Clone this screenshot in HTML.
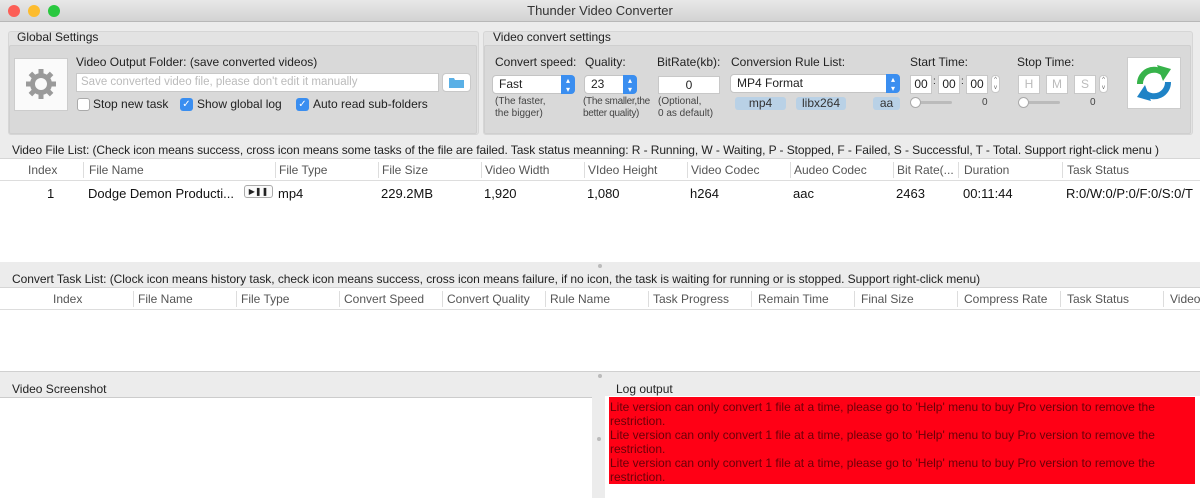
<!DOCTYPE html>
<html><head><meta charset="utf-8"><style>
*{box-sizing:border-box;margin:0;padding:0}
body{width:1200px;height:498px;overflow:hidden;background:#ececec;font-family:"Liberation Sans",sans-serif;font-size:12px;color:#222;position:relative}
.a{position:absolute;white-space:nowrap}
.title{left:0;top:0;width:1200px;height:22px;background:linear-gradient(#e8e8e8,#d3d3d3);border-bottom:1px solid #b8b8b8;text-align:center;line-height:22px;font-size:13px;color:#333}
.dot{width:12px;height:12px;border-radius:50%;top:5px}
.grp{border:1px solid #d6d6d6;background:#e3e3e3;border-radius:3px}
.inner{background:#d9d9d9;border:1px solid #cfcfcf;border-radius:2px}
.in{background:#fff;border:1px solid #c8c8c8}
.sel{background:#fff;border:1px solid #c4c4c4;border-radius:4px;padding-left:6px;line-height:17px}
.sel i{position:absolute;right:-1px;top:-1px;width:14px;height:19px;background:#3a8ef0;border-radius:0 4px 4px 0;color:#fff;font-style:normal;font-size:8px;text-align:center;line-height:9px;padding-top:1px}
.small{font-size:10px;color:#444;line-height:12px}
.tag{background:#b9d1e6;border-radius:3px;text-align:center;font-size:12px;color:#333;height:13px;line-height:13px}
.cb{width:13px;height:13px;border-radius:3px}
.cb.on{background:#3a8ef0;color:#fff;font-size:10px;line-height:13px;text-align:center}
.cb.off{background:#fff;border:1px solid #aaa}
.white{background:#fff}
.hdr{height:22px;border-bottom:1px solid #ddd;background:#fff;color:#555}
.hdr span,.row span{position:absolute;top:4px}
.sep{position:absolute;top:3px;width:1px;height:16px;background:#ddd}
.red{background:#ff0015;color:#6a0008;font-size:12px;line-height:14px;padding:3px 1px;letter-spacing:0;white-space:nowrap}
</style></head><body>
<div class="a title">Thunder Video Converter</div>
<div class="a dot" style="left:8px;background:#fc5f57"></div>
<div class="a dot" style="left:28px;background:#fdbc2e"></div>
<div class="a dot" style="left:48px;background:#29c83f"></div>

<div class="a grp" style="left:8px;top:31px;width:471px;height:104px"></div>
<div class="a" style="left:17px;top:30px;font-size:12px">Global Settings</div>
<div class="a inner" style="left:9px;top:45px;width:468px;height:89px"></div>
<div class="a" style="left:14px;top:58px;width:54px;height:53px;background:#fafafa;border:1px solid #ccc"></div>
<svg class="a" style="left:24px;top:67px" width="34" height="34" viewBox="0 0 34 34"><g fill="#9a9a9a"><circle cx="17" cy="17" r="11"/><g id="t"><rect x="14.5" y="2" width="5" height="7"/><rect x="14.5" y="25" width="5" height="7"/></g><use href="#t" transform="rotate(45 17 17)"/><use href="#t" transform="rotate(90 17 17)"/><use href="#t" transform="rotate(135 17 17)"/></g><circle cx="17" cy="17" r="6" fill="#fafafa"/></svg>
<div class="a" style="left:76px;top:55px">Video Output Folder: (save converted videos)</div>
<div class="a in" style="left:76px;top:73px;width:363px;height:19px;color:#bbb;padding-left:4px;line-height:17px;font-size:11.5px">Save converted video file, please don't edit it manually</div>
<div class="a" style="left:442px;top:73px;width:29px;height:19px;background:#fff;border:1px solid #c8c8c8;border-radius:4px"></div>
<svg class="a" style="left:449px;top:77px" width="15" height="11"><path d="M0 1h5l1 2h9v8H0z" fill="#5ab0e6"/></svg>
<div class="a cb off" style="left:77px;top:98px"></div><div class="a" style="left:93px;top:97px">Stop new task</div>
<div class="a cb on" style="left:180px;top:98px">✓</div><div class="a" style="left:197px;top:97px">Show global log</div>
<div class="a cb on" style="left:296px;top:98px">✓</div><div class="a" style="left:313px;top:97px">Auto read sub-folders</div>

<div class="a grp" style="left:483px;top:31px;width:710px;height:104px"></div>
<div class="a" style="left:493px;top:30px">Video convert settings</div>
<div class="a inner" style="left:484px;top:45px;width:707px;height:89px"></div>
<div class="a" style="left:495px;top:55px">Convert speed:</div>
<div class="a sel" style="left:492px;top:75px;width:83px;height:19px">Fast<i>▴<br>▾</i></div>
<div class="a small" style="left:495px;top:96px">(The faster,<br>the bigger)</div>
<div class="a" style="left:585px;top:55px">Quality:</div>
<div class="a sel" style="left:584px;top:75px;width:53px;height:19px">23<i>▴<br>▾</i></div>
<div class="a small" style="left:583px;top:96px;letter-spacing:-0.3px">(The smaller,the<br>better quality)</div>
<div class="a" style="left:657px;top:55px">BitRate(kb):</div>
<div class="a in" style="left:658px;top:76px;width:62px;height:18px;text-align:center;line-height:16px">0</div>
<div class="a small" style="left:658px;top:96px">(Optional,<br>0 as default)</div>
<div class="a" style="left:731px;top:55px">Conversion Rule List:</div>
<div class="a sel" style="left:730px;top:74px;width:170px;height:19px">MP4 Format<i>▴<br>▾</i></div>
<div class="a tag" style="left:735px;top:97px;width:51px">mp4</div>
<div class="a tag" style="left:796px;top:97px;width:50px">libx264</div>
<div class="a tag" style="left:873px;top:97px;width:27px;overflow:hidden">aa</div>
<div class="a" style="left:910px;top:55px">Start Time:</div>
<div class="a in" style="left:910px;top:75px;width:22px;height:19px;text-align:center;line-height:17px">00</div>
<div class="a in" style="left:938px;top:75px;width:22px;height:19px;text-align:center;line-height:17px">00</div>
<div class="a in" style="left:966px;top:75px;width:22px;height:19px;text-align:center;line-height:17px">00</div>
<div class="a" style="left:933px;top:76px;font-size:10px">:</div><div class="a" style="left:961px;top:76px;font-size:10px">:</div>
<div class="a in" style="left:991px;top:75px;width:9px;height:18px;border-radius:4px;font-size:6px;line-height:8px;text-align:center;color:#666">^<br>v</div>
<div class="a" style="left:912px;top:101px;width:40px;height:3px;background:#bbb;border-radius:2px"></div>
<div class="a" style="left:910px;top:97px;width:11px;height:11px;border-radius:50%;background:#fff;border:1px solid #aaa"></div>
<div class="a small" style="left:982px;top:97px">0</div>
<div class="a" style="left:1017px;top:55px">Stop Time:</div>
<div class="a in" style="left:1018px;top:75px;width:22px;height:19px;text-align:center;line-height:17px;color:#bbb">H</div>
<div class="a in" style="left:1046px;top:75px;width:22px;height:19px;text-align:center;line-height:17px;color:#bbb">M</div>
<div class="a in" style="left:1074px;top:75px;width:22px;height:19px;text-align:center;line-height:17px;color:#bbb">S</div>
<div class="a in" style="left:1099px;top:75px;width:9px;height:18px;border-radius:4px;font-size:6px;line-height:8px;text-align:center;color:#666">^<br>v</div>
<div class="a" style="left:1020px;top:101px;width:40px;height:3px;background:#bbb;border-radius:2px"></div>
<div class="a" style="left:1018px;top:97px;width:11px;height:11px;border-radius:50%;background:#fff;border:1px solid #aaa"></div>
<div class="a small" style="left:1090px;top:97px">0</div>
<div class="a" style="left:1127px;top:57px;width:54px;height:52px;background:#fff;border:1px solid #ccc"></div>
<svg class="a" style="left:1131px;top:62px" width="46" height="42" viewBox="0 0 46 42"><path d="M9 22A14 14 0 0 1 32 11" stroke="#37b34a" stroke-width="6" fill="none"/><path d="M26 3l14 4-8 12z" fill="#37b34a"/><path d="M37 20A14 14 0 0 1 14 31" stroke="#1f83c6" stroke-width="6" fill="none"/><path d="M20 39L6 35l8-12z" fill="#1f83c6"/></svg>

<div class="a" style="left:12px;top:143px;letter-spacing:-0.08px">Video File List: (Check icon means success, cross icon means some tasks of the file are failed. Task status meanning: R - Running, W - Waiting, P - Stopped, F - Failed, S - Successful, T - Total. Support right-click menu )</div>
<div class="a white" style="left:0;top:158px;width:1200px;height:104px;border-top:1px solid #d6d6d6"></div>
<div class="a hdr" style="left:0;top:159px;width:1200px">
<span style="left:28px">Index</span><span style="left:89px">File Name</span><span style="left:279px">File Type</span><span style="left:382px">File Size</span><span style="left:485px">Video Width</span><span style="left:588px">VIdeo Height</span><span style="left:691px">Video Codec</span><span style="left:794px">Audeo Codec</span><span style="left:897px">Bit Rate(...</span><span style="left:964px">Duration</span><span style="left:1067px">Task Status</span>
<i class="sep" style="left:83px"></i><i class="sep" style="left:275px"></i><i class="sep" style="left:378px"></i><i class="sep" style="left:481px"></i><i class="sep" style="left:584px"></i><i class="sep" style="left:687px"></i><i class="sep" style="left:790px"></i><i class="sep" style="left:893px"></i><i class="sep" style="left:958px"></i><i class="sep" style="left:1062px"></i></div>
<div class="a row" style="left:0;top:182px;width:1200px;height:22px;font-size:13px;color:#111">
<span style="left:47px">1</span><span style="left:88px">Dodge Demon Producti...</span><span style="left:278px">mp4</span><span style="left:381px">229.2MB</span><span style="left:484px">1,920</span><span style="left:587px">1,080</span><span style="left:690px">h264</span><span style="left:793px">aac</span><span style="left:896px">2463</span><span style="left:963px">00:11:44</span><span style="left:1066px">R:0/W:0/P:0/F:0/S:0/T</span></div>
<div class="a" style="left:244px;top:185px;width:29px;height:13px;border:1px solid #aaa;border-radius:3px;font-size:8px;text-align:center;line-height:11px;background:#fafafa">▶❚❚</div>
<div class="a" style="left:598px;top:264px;width:4px;height:4px;border-radius:50%;background:#bbb"></div>

<div class="a" style="left:12px;top:272px;letter-spacing:-0.04px">Convert Task List: (Clock icon means history task, check icon means success, cross icon means failure, if no icon, the task is waiting for running or is stopped. Support right-click menu)</div>
<div class="a white" style="left:0;top:287px;width:1200px;height:85px;border-top:1px solid #d6d6d6;border-bottom:1px solid #d0d0d0"></div>
<div class="a hdr" style="left:0;top:288px;width:1200px">
<span style="left:53px">Index</span><span style="left:138px">File Name</span><span style="left:241px">File Type</span><span style="left:344px">Convert Speed</span><span style="left:447px">Convert Quality</span><span style="left:550px">Rule Name</span><span style="left:653px">Task Progress</span><span style="left:758px">Remain Time</span><span style="left:861px">Final Size</span><span style="left:964px">Compress Rate</span><span style="left:1067px">Task Status</span><span style="left:1170px">Video</span>
<i class="sep" style="left:133px"></i><i class="sep" style="left:236px"></i><i class="sep" style="left:339px"></i><i class="sep" style="left:442px"></i><i class="sep" style="left:545px"></i><i class="sep" style="left:648px"></i><i class="sep" style="left:751px"></i><i class="sep" style="left:854px"></i><i class="sep" style="left:957px"></i><i class="sep" style="left:1060px"></i><i class="sep" style="left:1163px"></i></div>
<div class="a" style="left:598px;top:374px;width:4px;height:4px;border-radius:50%;background:#bbb"></div>

<div class="a" style="left:12px;top:382px">Video Screenshot</div>
<div class="a white" style="left:0;top:397px;width:592px;height:101px;border-top:1px solid #ccc"></div>
<div class="a" style="left:597px;top:437px;width:4px;height:4px;border-radius:50%;background:#bbb"></div>
<div class="a" style="left:616px;top:382px">Log output</div>
<div class="a white" style="left:605px;top:396px;width:595px;height:102px"></div>
<div class="a red" style="left:609px;top:397px;width:586px;height:87px">Lite version can only convert 1 file at a time, please go to 'Help' menu to buy Pro version to remove the<br>restriction.<br>Lite version can only convert 1 file at a time, please go to 'Help' menu to buy Pro version to remove the<br>restriction.<br>Lite version can only convert 1 file at a time, please go to 'Help' menu to buy Pro version to remove the<br>restriction.</div>
</body></html>
